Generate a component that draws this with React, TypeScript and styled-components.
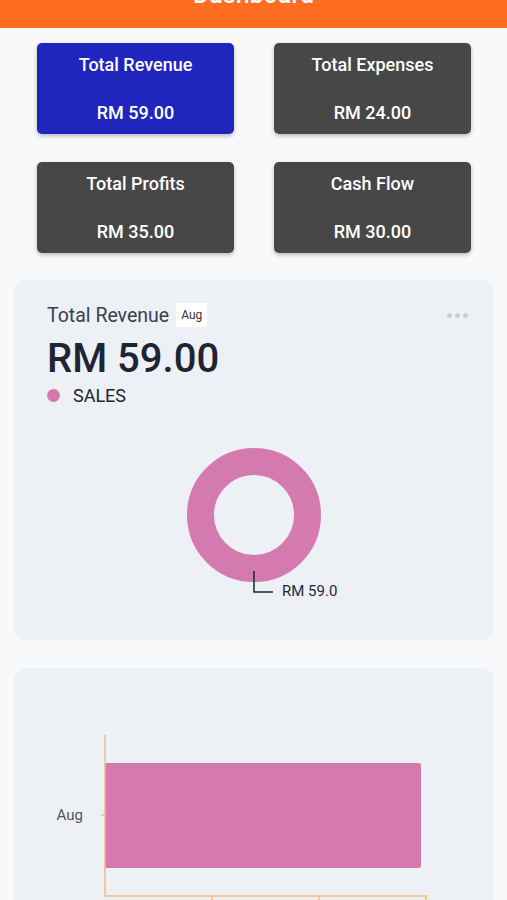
import React from 'react'
import styled, { createGlobalStyle } from 'styled-components'

const GlobalStyle = createGlobalStyle`
  body {
    margin: 0;
    background: #f8f9fa;
    font-family: Roboto, 'Liberation Sans', sans-serif;
  }
`

const PINK = '#d57aaf'
const AXIS = '#f2bb82'

const summary = [
  { title: 'Total Revenue', value: 'RM 59.00', active: true },
  { title: 'Total Expenses', value: 'RM 24.00' },
  { title: 'Total Profits', value: 'RM 35.00' },
  { title: 'Cash Flow', value: 'RM 30.00' },
]

const Dashboard: React.FC = () => {
  return (
    <Page>
      <GlobalStyle />
      <Header>
        <MenuIcon>
          <span />
          <span />
          <span />
        </MenuIcon>
        <HeaderTitle>Dashboard</HeaderTitle>
      </Header>

      <CardGrid>
        {summary.map((s) => (
          <StatCard key={s.title} active={s.active}>
            <StatLabel>{s.title}</StatLabel>
            <StatLabel>{s.value}</StatLabel>
          </StatCard>
        ))}
      </CardGrid>

      <Panel>
        <PanelHead>
          <PanelTitle>Total Revenue</PanelTitle>
          <Badge>Aug</Badge>
          <Dots>
            <i />
            <i />
            <i />
          </Dots>
        </PanelHead>
        <BigValue>RM 59.00</BigValue>
        <Legend>
          <LegendDot />
          SALES
        </Legend>
        <DonutSvg viewBox="0 0 414 218">
          <circle cx="207" cy="109" r="53.5" fill="none" stroke={PINK} strokeWidth="27" />
          <polyline points="207,165 207,186 226,186" fill="none" stroke="#1f2937" strokeWidth="1.5" />
          <text x="235" y="190" fontSize="15" fill="#1f2937" fontFamily="Roboto, sans-serif">
            RM 59.0
          </text>
        </DonutSvg>
      </Panel>

      <BarPanel>
        <svg width="480" height="260" viewBox="0 0 480 260">
          <rect x="91" y="95" width="316" height="105" rx="2" fill={PINK} />
          <line x1="91" y1="67" x2="91" y2="229" stroke={AXIS} strokeWidth="1.5" />
          <line x1="87" y1="147" x2="91" y2="147" stroke={AXIS} strokeWidth="1.5" />
          <line x1="91" y1="228" x2="413" y2="228" stroke={AXIS} strokeWidth="1.5" />
          {[198, 305, 412].map((x) => (
            <line key={x} x1={x} y1="228" x2={x} y2="236" stroke={AXIS} strokeWidth="1.5" />
          ))}
          <text x="69" y="152" textAnchor="end" fontSize="15" fill="#555" fontFamily="Roboto, sans-serif">
            Aug
          </text>
        </svg>
      </BarPanel>
    </Page>
  )
}

const Page = styled.div`
  overflow: hidden;
  padding-bottom: 40px;
`

const Header = styled.header`
  position: relative;
  height: 64px;
  margin-top: -36px;
  background: #fe6d21;
  display: flex;
  align-items: center;
  justify-content: center;
`

const MenuIcon = styled.div`
  position: absolute;
  left: 26px;
  top: 17px;
  display: flex;
  flex-direction: column;
  gap: 5px;
  span {
    display: block;
    width: 24px;
    height: 3px;
    background: #fff;
    opacity: 0.35;
  }
`

const HeaderTitle = styled.h1`
  margin: 0;
  color: #fff;
  font-size: 25px;
  font-weight: 500;
  line-height: 28px;
  transform: translateY(-1px);
`

const CardGrid = styled.div`
  display: grid;
  grid-template-columns: 1fr 1fr;
  column-gap: 40px;
  row-gap: 28px;
  padding: 15px 36px 0 37px;
`

const StatCard = styled.div<{ active?: boolean }>`
  height: 91px;
  box-sizing: border-box;
  padding: 12px 8px 11px;
  border-radius: 5px;
  background: ${(p) => (p.active ? '#1f25bd' : '#474747')};
  box-shadow: 0 2px 4px rgba(0, 0, 0, 0.25);
  display: flex;
  flex-direction: column;
  justify-content: space-between;
  align-items: center;
`

const StatLabel = styled.div`
  color: #fff;
  font-size: 18px;
  font-weight: 500;
  line-height: 20px;
`

const Panel = styled.section`
  margin: 27px 13px 0 14px;
  padding: 22px 33px 16px;
  background: #edf0f4;
  border-radius: 12px;
`

const PanelHead = styled.div`
  display: flex;
  align-items: center;
  height: 26px;
`

const PanelTitle = styled.span`
  font-size: 19.5px;
  color: #374151;
`

const Badge = styled.span`
  margin-left: 7px;
  background: #fff;
  font-size: 12px;
  color: #333;
  line-height: 24px;
  padding: 0 5px;
`

const Dots = styled.div`
  margin-left: auto;
  margin-right: -7px;
  display: flex;
  gap: 3px;
  i {
    width: 5px;
    height: 5px;
    border-radius: 50%;
    background: #c9ced8;
  }
`

const BigValue = styled.div`
  margin-top: 8px;
  font-size: 40px;
  font-weight: 500;
  line-height: 46px;
  color: #1e2433;
`

const Legend = styled.div`
  margin-top: 2px;
  height: 22px;
  display: flex;
  align-items: center;
  font-size: 18px;
  color: #1e2433;
`

const LegendDot = styled.span`
  width: 13px;
  height: 13px;
  border-radius: 50%;
  background: ${PINK};
  margin: 0 13px 0 0;
`

const DonutSvg = styled.svg`
  display: block;
  width: 414px;
  height: 218px;
`

const BarPanel = styled.section`
  margin: 28px 13px 0 14px;
  background: #edf0f4;
  border-radius: 12px;
  height: 280px;
  svg {
    display: block;
  }
`

export default Dashboard
